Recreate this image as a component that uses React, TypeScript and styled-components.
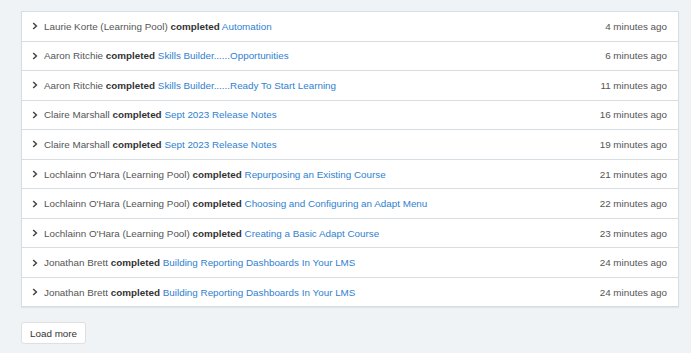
import React from "react";
import styled, { createGlobalStyle } from "styled-components";

const Global = createGlobalStyle`
  html, body { margin: 0; padding: 0; background: #f0f3f6; }
  body { font-family: "Liberation Sans", Arial, sans-serif; }
`;

const Page = styled.div`
  padding: 11px 12px 8px 21px;
  width: 658px;
`;

const Panel = styled.div`
  background: #fff;
  border: 1px solid #d6dee4;
  border-bottom: none;
  box-shadow: 0 1px 1px rgba(0, 0, 0, 0.06);
`;

const Row = styled.div`
  display: flex;
  align-items: center;
  height: 28.55px;
  border-bottom: 1px solid #d6dee4;
  padding: 0 11px 0 10px;
  font-size: 9.85px;
  color: #555;
`;

const Chevron = styled.svg`
  width: 6px;
  height: 8px;
  margin-right: 6px;
  flex: none;
`;

const Text = styled.div`
  flex: 1;
  white-space: nowrap;
`;

const Verb = styled.b`
  color: #333;
  font-weight: bold;
`;

const Link = styled.a`
  color: #2f7fcf;
  text-decoration: none;
`;

const Time = styled.span`
  color: #555;
  white-space: nowrap;
`;

const LoadMore = styled.button`
  margin-top: 15px;
  height: 22px;
  padding: 0 8px;
  background: #fff;
  border: 1px solid #dcdfe3;
  border-radius: 3px;
  font-family: "Liberation Sans", Arial, sans-serif;
  font-size: 9.85px;
  color: #333;
`;

const items = [
  ["Laurie Korte (Learning Pool)", "Automation", "4 minutes ago"],
  ["Aaron Ritchie", "Skills Builder......Opportunities", "6 minutes ago"],
  ["Aaron Ritchie", "Skills Builder......Ready To Start Learning", "11 minutes ago"],
  ["Claire Marshall", "Sept 2023 Release Notes", "16 minutes ago"],
  ["Claire Marshall", "Sept 2023 Release Notes", "19 minutes ago"],
  ["Lochlainn O'Hara (Learning Pool)", "Repurposing an Existing Course", "21 minutes ago"],
  ["Lochlainn O'Hara (Learning Pool)", "Choosing and Configuring an Adapt Menu", "22 minutes ago"],
  ["Lochlainn O'Hara (Learning Pool)", "Creating a Basic Adapt Course", "23 minutes ago"],
  ["Jonathan Brett", "Building Reporting Dashboards In Your LMS", "24 minutes ago"],
  ["Jonathan Brett", "Building Reporting Dashboards In Your LMS", "24 minutes ago"],
];

export default function App() {
  return (
    <>
      <Global />
      <Page>
        <Panel>
          {items.map(([who, what, when], i) => (
            <Row key={i}>
              <Chevron viewBox="0 0 6 8">
                <path d="M1.2 1 L4.4 4 L1.2 7" fill="none" stroke="#444" strokeWidth="1.5" />
              </Chevron>
              <Text>
                {who} <Verb>completed</Verb> <Link href="#">{what}</Link>
              </Text>
              <Time>{when}</Time>
            </Row>
          ))}
        </Panel>
        <LoadMore>Load more</LoadMore>
      </Page>
    </>
  );
}
